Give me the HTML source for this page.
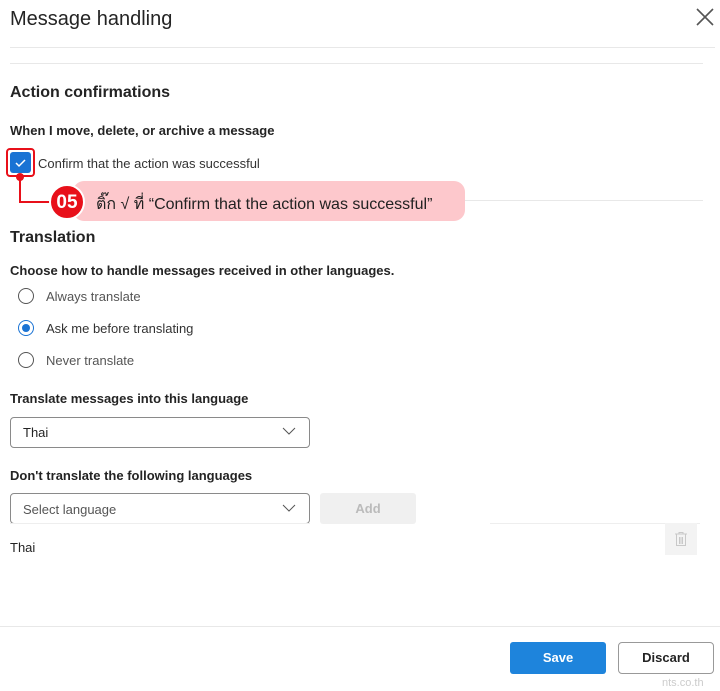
<!DOCTYPE html>
<html><head><meta charset="utf-8"><style>
*{margin:0;padding:0;box-sizing:border-box}
body{width:720px;height:691px;background:#fff;font-family:"Segoe UI","Liberation Sans","Noto Sans CJK SC",sans-serif;color:#242424;position:relative;overflow:hidden}
.a{position:absolute;white-space:nowrap}
.hr{position:absolute;height:1px;background:#e8e8e8}
.radio{position:absolute;width:16px;height:16px;border:1.3px solid #555;border-radius:50%}
.dd{position:absolute;border:1px solid #8a8a8a;border-radius:4px;background:#fff}
</style></head><body>
<div class="a" style="left:10px;top:8px;font-size:20px;">Message handling</div>
<svg class="a" style="left:696px;top:8px" width="18" height="18"><path d="M1 1L17 17M17 1L1 17" stroke="#555" stroke-width="1.6"/></svg>
<div class="hr" style="left:10px;top:47px;width:705px"></div>
<div class="hr" style="left:10px;top:63px;width:693px"></div>
<div class="a" style="left:10px;top:84px;font-size:16px;font-weight:600">Action confirmations</div>
<div class="a" style="left:10px;top:123px;font-size:13px;font-weight:600">When I move, delete, or archive a message</div>
<div class="a" style="left:10px;top:152px;width:21px;height:21px;background:#1a73d4;border-radius:3px"></div>
<svg class="a" style="left:10px;top:152px" width="21" height="21"><path d="M6 11l3 3l6-6" stroke="#fff" stroke-width="1.5" fill="none"/></svg>
<div class="a" style="left:6px;top:148px;width:29px;height:29px;border:2px solid #e8101a;border-radius:4px"></div>
<div class="a" style="left:38px;top:156px;font-size:13px;color:#333">Confirm that the action was successful</div>
<div class="hr" style="left:200px;top:200px;width:503px"></div>
<div class="a" style="left:73px;top:181px;width:392px;height:40px;background:#fdc8cc;border-radius:11px"></div>
<div class="a" style="left:19px;top:177px;width:2px;height:26px;background:#e8101a"></div>
<div class="a" style="left:19px;top:201px;width:35px;height:2px;background:#e8101a"></div>
<div class="a" style="left:16px;top:173px;width:8px;height:8px;border-radius:50%;background:#e8101a"></div>
<div class="a" style="left:49px;top:184px;width:36px;height:36px;border-radius:50%;background:#e8101a;border:2px solid #fff;color:#fff;font-size:19px;font-weight:700;text-align:center;line-height:34px">05</div>
<div class="a" style="left:96px;top:192px;font-size:16px;color:#222">ติ๊ก √ ที่ “Confirm that the action was successful”</div>
<div class="a" style="left:10px;top:229px;font-size:16px;font-weight:600">Translation</div>
<div class="a" style="left:10px;top:263px;font-size:13px;font-weight:600">Choose how to handle messages received in other languages.</div>
<div class="radio" style="left:18px;top:288px"></div>
<div class="a" style="left:46px;top:289px;font-size:13px;color:#555">Always translate</div>
<div class="radio" style="left:18px;top:320px;border-color:#1a73d4"></div>
<div class="a" style="left:22px;top:324px;width:8px;height:8px;border-radius:50%;background:#1a73d4"></div>
<div class="a" style="left:46px;top:321px;font-size:13px;color:#333">Ask me before translating</div>
<div class="radio" style="left:18px;top:352px"></div>
<div class="a" style="left:46px;top:353px;font-size:13px;color:#555">Never translate</div>
<div class="a" style="left:10px;top:391px;font-size:13px;font-weight:600">Translate messages into this language</div>
<div class="dd" style="left:10px;top:417px;width:300px;height:31px"></div>
<div class="a" style="left:23px;top:425px;font-size:13px">Thai</div>
<svg class="a" style="left:282px;top:427px" width="14" height="9"><path d="M1 1l6 6l6-6" stroke="#555" fill="none"/></svg>
<div class="a" style="left:10px;top:468px;font-size:13px;font-weight:600">Don't translate the following languages</div>
<div class="dd" style="left:10px;top:493px;width:300px;height:31px"></div>
<div class="a" style="left:23px;top:502px;font-size:13px;color:#555">Select language</div>
<svg class="a" style="left:282px;top:504px" width="14" height="9"><path d="M1 1l6 6l6-6" stroke="#555" fill="none"/></svg>
<div class="a" style="left:320px;top:493px;width:96px;height:31px;background:#f0f0f0;border-radius:3px;color:#bbb;font-size:13px;font-weight:600;text-align:center;line-height:31px">Add</div>
<div class="hr" style="left:10px;top:523px;width:300px;background:#eee"></div>
<div class="hr" style="left:490px;top:523px;width:210px;background:#eee"></div>
<div class="a" style="left:10px;top:540px;font-size:13px">Thai</div>
<div class="a" style="left:665px;top:523px;width:32px;height:32px;background:#f3f3f3"></div>
<svg class="a" style="left:673px;top:531px" width="16" height="16"><path d="M2 3h12M6 3V1.5h4V3M3.5 3.5v11h9v-11M6.5 6v7M8 6v7M9.5 6v7" stroke="#c8c8c8" fill="none"/></svg>
<div class="hr" style="left:0;top:626px;width:720px"></div>
<div class="a" style="left:510px;top:642px;width:96px;height:32px;background:#1e84dc;border-radius:3px;color:#fff;font-size:13px;font-weight:700;text-align:center;line-height:32px">Save</div>
<div class="a" style="left:618px;top:642px;width:96px;height:32px;border:1px solid #999;border-radius:4px;font-size:13px;font-weight:600;text-align:center;line-height:30px">Discard</div>
<div class="a" style="left:662px;top:677px;font-size:11px;color:#ccc">nts.co.th</div>
</body></html>
